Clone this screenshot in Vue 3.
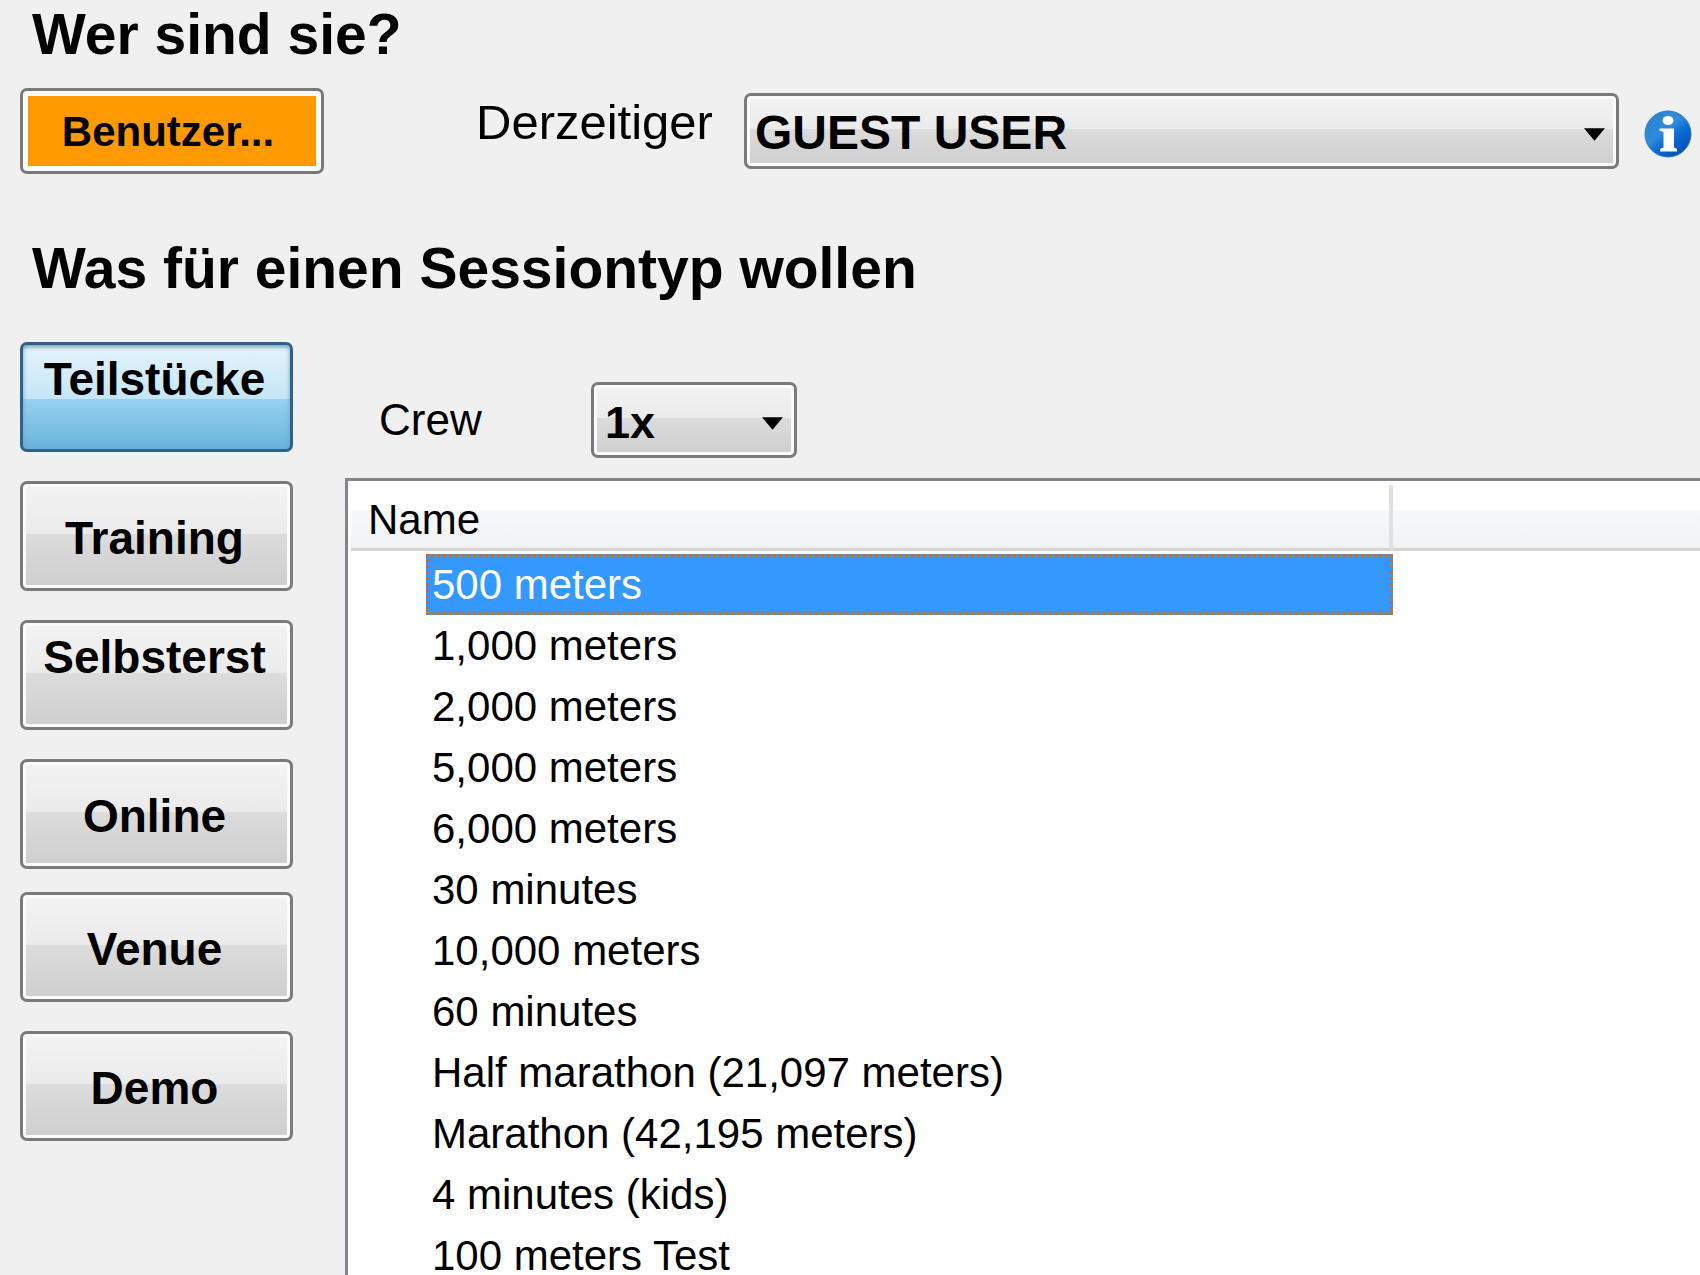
<script setup>
import { ref } from 'vue'

const users = ['GUEST USER']
const crews = ['1x', '2x', '4x', '8x']

const currentUser = ref('GUEST USER')
const crew = ref('1x')
const activeType = ref('Teilstücke')
const selected = ref(0)

// wrapped: the label breaks onto a second line that the button cuts off
const sessionTypes = [
    { name: 'Teilstücke', wrapped: true },
    { name: 'Training' },
    { name: 'Selbsterst', wrapped: true },
    { name: 'Online', last: true },
    { name: 'Venue' },
    { name: 'Demo' }
]

const sessions = [
    '500 meters',
    '1,000 meters',
    '2,000 meters',
    '5,000 meters',
    '6,000 meters',
    '30 minutes',
    '10,000 meters',
    '60 minutes',
    'Half marathon (21,097 meters)',
    'Marathon (42,195 meters)',
    '4 minutes (kids)',
    '100 meters Test'
]
</script>

<template>
    <main class="window">
        <h1>Wer sind sie?</h1>
        <div class="user-row">
            <button type="button" class="user-button"><span>Benutzer...</span></button>
            <label for="user" class="user-label">Derzeitiger</label>
            <div class="combo user-combo">
                <select id="user" v-model="currentUser">
                    <option v-for="u in users" :key="u">{{ u }}</option>
                </select>
                <svg class="arrow" viewBox="0 0 22 13" aria-hidden="true"><path d="M0 0H22L11 13Z" /></svg>
            </div>
            <button type="button" class="info" aria-label="Info">
                <svg viewBox="0 0 48 48">
                    <defs>
                        <linearGradient id="ball" x1="0.1" y1="0.1" x2="0.8" y2="1">
                            <stop offset="0" stop-color="#2a86d2" />
                            <stop offset="0.4" stop-color="#2f8bdb" />
                            <stop offset="0.6" stop-color="#0d6dd0" />
                            <stop offset="1" stop-color="#0347bb" />
                        </linearGradient>
                    </defs>
                    <circle cx="24" cy="24" r="23" fill="url(#ball)" stroke="#2b78c4" />
                    <ellipse cx="24" cy="10.5" rx="5.5" ry="4.5" fill="#fff" />
                    <path d="M15.5 18.5H30V37.5L33 39V41.500H16V39L19.500 37.500V22L15.500 20.500Z" fill="#fff" />
                </svg>
            </button>
        </div>

        <h2>Was für einen Sessiontyp wollen</h2>
        <div class="session">
            <nav class="types">
                <button
                    v-for="t in sessionTypes"
                    :key="t.name"
                    type="button"
                    class="type-button"
                    :class="{ active: t.name == activeType, wrapped: t.wrapped, last: t.last }"
                    @click="activeType = t.name"
                >
                    {{ t.name }}
                </button>
            </nav>
            <section class="content">
                <div class="crew-row">
                    <label for="crew">Crew</label>
                    <div class="combo crew-combo">
                        <select id="crew" v-model="crew">
                            <option v-for="c in crews" :key="c">{{ c }}</option>
                        </select>
                        <svg class="arrow" viewBox="0 0 22 13" aria-hidden="true"><path d="M0 0H22L11 13Z" /></svg>
                    </div>
                </div>
                <div class="list">
                    <table>
                        <colgroup>
                            <col class="indent-col">
                            <col>
                            <col class="rest-col">
                        </colgroup>
                        <thead>
                            <tr>
                                <th colspan="2" class="name-head">Name</th>
                                <th></th>
                            </tr>
                        </thead>
                        <tbody>
                            <tr v-for="s, i in sessions" :key="s" @click="selected = i">
                                <td></td>
                                <td class="name" :class="{ selected: i == selected }">{{ s }}</td>
                                <td></td>
                            </tr>
                        </tbody>
                    </table>
                </div>
            </section>
        </div>
    </main>
</template>

<style>
body {
    background: #f0f0f0;
}
</style>

<style scoped>
.window {
    display: flex;
    flex-direction: column;
    box-sizing: border-box;
    height: 100vh;
    overflow: hidden;
    padding-left: 20px;
    font-family: "Liberation Sans", Arial, sans-serif;
    font-size: 42px;
    color: #000;
}

h1,
h2 {
    margin: 0 0 0 12px;
    font-size: 57px;
    line-height: 64px;
    font-weight: bold;
}

h1 {
    padding-top: 2px;
}

h2 {
    margin-top: 62px;
}

button,
select {
    font-family: inherit;
    font-weight: bold;
    color: #000;
}

.user-row {
    display: flex;
    align-items: center;
    margin-top: 22px;
    padding-right: 8px;
}

.user-button {
    flex: none;
    width: 304px;
    height: 86px;
    padding: 5px;
    border: 3px solid #7a7a7a;
    border-radius: 7px;
    background: #fbfbfb;
    font-size: 42px;
}

.user-button span {
    display: block;
    box-sizing: border-box;
    height: 100%;
    padding-right: 8px;
    background: #ff9900;
    line-height: 72px;
}

.user-label {
    margin: 0 28px 18px 152px;
    width: 240px;
    font-size: 49px;
    line-height: 56px;
}

.combo {
    position: relative;
}

.user-combo {
    flex: 1;
}

.combo select {
    display: block;
    appearance: none;
    width: 100%;
    height: 76px;
    margin: 0;
    padding: 2px 40px 0 8px;
    border: 3px solid #7a7a7a;
    border-radius: 7px;
    background: linear-gradient(#f3f3f3, #ebebeb 47%, #dcdcdc 47%, #cecece);
    box-shadow: inset 0 0 0 3px #fbfbfb;
    font-size: 48px;
}

.combo .arrow {
    position: absolute;
    right: 14px;
    top: 35px;
    width: 21px;
    height: 13px;
    pointer-events: none;
}

.info {
    flex: none;
    width: 48px;
    height: 48px;
    margin: 6px 0 0 25px;
    padding: 0;
    border: none;
    background: none;
}

.info svg {
    display: block;
}

.session {
    display: flex;
    flex: 1;
    min-height: 0;
    margin-top: 42px;
}

.types {
    display: flex;
    flex: none;
    flex-direction: column;
    gap: 29px;
    width: 273px;
}

.type-button {
    height: 110px;
    padding: 4px 4px 0 0;
    border: 3px solid #7a7a7a;
    border-radius: 7px;
    background: linear-gradient(#f3f3f3, #ebebeb 48%, #dcdcdc 48%, #cecece);
    box-shadow: inset 0 0 0 3px #fbfbfb;
    font-size: 46px;
    line-height: 52px;
}

.type-button.wrapped {
    padding-top: 0;
    padding-bottom: 36px;
}

.type-button.last {
    margin-bottom: -6px;
}

.type-button.active {
    border-color: #2c628b;
    background: linear-gradient(#e5f4fc, #c4e5f6 52%, #98d1ef 52%, #68b3db);
    box-shadow: inset 0 2px 4px #6f9db8;
}

.content {
    display: flex;
    flex: 1;
    flex-direction: column;
    min-width: 0;
    margin-left: 52px;
}

.crew-row {
    display: flex;
    align-items: center;
    padding: 40px 0 20px 34px;
}

.crew-row label {
    width: 212px;
    font-size: 44px;
}

.crew-combo {
    width: 206px;
}

.crew-combo select {
    font-size: 45px;
    padding-top: 4px;
    padding-left: 11px;
}

.list {
    flex: 1;
    min-height: 0;
    overflow: hidden;
    padding: 4px 0 0 3px;
    border-top: 3px solid #82858f;
    border-left: 3px solid #82858f;
    background: #fff;
}

table {
    width: 100%;
    table-layout: fixed;
    border-collapse: separate;
    border-spacing: 0;
}

.indent-col {
    width: 75px;
}

.rest-col {
    width: 307px;
}

th {
    box-sizing: border-box;
    height: 66px;
    padding: 7px 0 0;
    border-bottom: 3px solid #d5d5d5;
    background: linear-gradient(#fff 40%, #f7f8fa 40%, #f1f2f4);
    font-weight: normal;
    text-align: left;
}

.name-head {
    padding-left: 17px;
    border-right: 4px solid #e0e0e0;
}

tbody::before {
    content: "";
    display: block;
    height: 3px;
}

td {
    height: 61px;
    padding: 0;
}

.name {
    box-sizing: border-box;
    padding-left: 3px;
    border: 3px solid transparent;
    line-height: 55px;
    white-space: nowrap;
}

.name.selected {
    border: 3px dotted #c8701c;
    background: #3399ff;
    color: #fff;
}
</style>
